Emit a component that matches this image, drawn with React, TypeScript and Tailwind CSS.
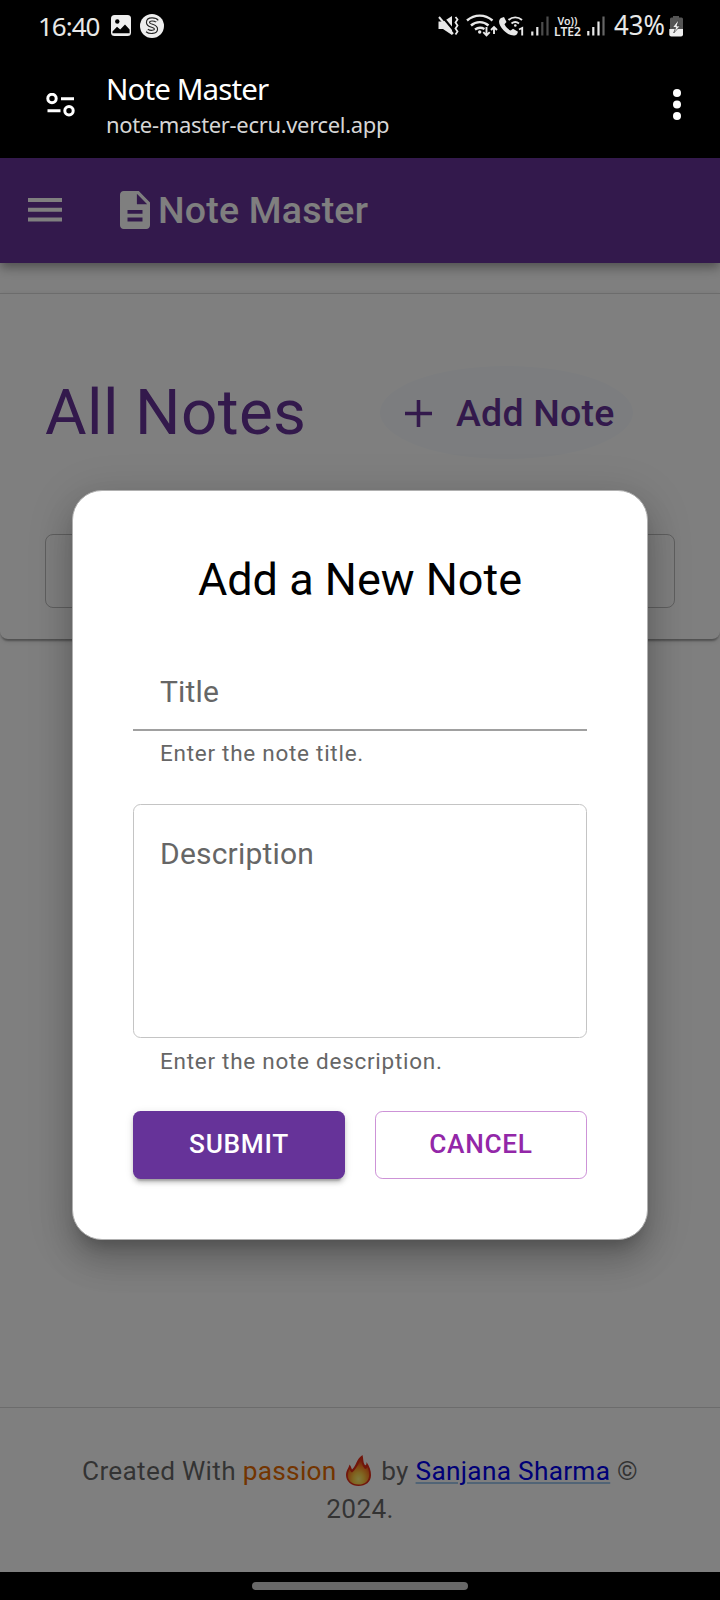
import type { ReactNode } from "react";

function StatusBar() {
  return (
    <div className="flex h-[52px] items-center justify-between pl-[38px] pr-[36px] font-['Noto_Sans',sans-serif] text-[#e8e8e8]">
      <div className="flex items-center">
        <span className="w-[62px] whitespace-nowrap pb-[1px] text-[26px] leading-[36px] tracking-[-1px]">16:40</span>
        <svg className="ml-[11px] h-[22px] w-[20px]" viewBox="0 0 20 22">
          <rect width="20" height="21" rx="3.5" fill="#eee" />
          <circle cx="6.3" cy="6.5" r="2.2" fill="#000" />
          <path d="M1.5 16.5 6 11.8l3.2 2.7 4.8-5 4.6 5v3.8H1.5Z" fill="#000" />
        </svg>
        <svg className="ml-[9px] size-6" viewBox="0 0 24 24">
          <circle cx="12" cy="12" r="12" fill="#eee" />
          <path d="M17 7.2C15.5 5 8 4.2 8 8.400c0 4.200 8 2.600 8 6.600 0 3.600-6.500 3.500-9 1.500" fill="none" stroke="#222" strokeWidth="4.200" />
          <path d="M17 7.2C15.5 5 8 4.2 8 8.400c0 4.200 8 2.600 8 6.600 0 3.600-6.500 3.500-9 1.500" fill="none" stroke="#eee" strokeWidth="2" />
        </svg>
      </div>
      <svg className="h-[36px] w-[250px]" viewBox="434 8 250 36" fill="none">
        <g fill="#e8e8e8">
          <path d="M438.500 21.500h5l8.500-5.500v19l-9-6h-4.500Z" />
          <path d="m441 15 12 14.500" stroke="#000" strokeWidth="2" />
          <path d="m439 17 14 17" stroke="#e8e8e8" strokeWidth="2" />
          <path d="M455.500 17l2 2.500-2 3 2 3-2 3 2 3-2 3" fill="none" stroke="#e8e8e8" strokeWidth="1.800" />
        </g>
        <g stroke="#e8e8e8" strokeWidth="2.400">
          <path d="M467 20.500c7.500-6.500 18-6.500 25.500 0M471 25.500c5-4.500 12.500-4.500 17.500 0M475 29.500c3-2.200 6.500-2.200 9.500-.5" />
          <circle cx="479.700" cy="32" r="1.700" fill="#e8e8e8" stroke="none" />
          <path d="M486.500 27v8m-3.200-2.800 3.200 3.200 3.200-3.200M494 34v-6m-3 2 3-3 3 3" strokeWidth="1.900" />
        </g>
        <path d="m501 18 3-1 2.500 5-2 2.300c1.500 3.200 3.500 5 6.200 6.200l2.300-1.800 5 3-1 2.500c-3 3-10 0-13.500-4-4.500-5-6-9.500-2.500-12.200Z" fill="#e8e8e8" />
        <g stroke="#e8e8e8" strokeWidth="1.900">
          <path d="M508.500 20c4-3.500 9.500-3.500 13.500 0M511.500 23.500c2.500-2 5-2 7.500 0" />
          <circle cx="515.300" cy="25.500" r="1.300" fill="#e8e8e8" stroke="none" />
          <path d="m519 29.500 3.200-1.500v7.500" />
        </g>
        <g strokeWidth="2.200">
          <path d="M532.300 31.500v4M537.300 27v8.500" stroke="#e8e8e8" />
          <path d="M542.300 22v13.500M547.500 16.500v19" stroke="#4c4c4c" />
          <path d="M588.300 31v4.500M593.300 27v8.500M598.500 21.500v14" stroke="#e8e8e8" />
          <path d="M603.500 16.500v19" stroke="#666" />
        </g>
        <text x="557.500" y="24.500" fill="#e8e8e8" fontSize="11.500" fontWeight="600" textLength="20" lengthAdjust="spacingAndGlyphs">Vo))</text>
        <text x="554" y="36" fill="#e8e8e8" fontSize="12" fontWeight="600" textLength="27" lengthAdjust="spacingAndGlyphs">LTE2</text>
        <text x="614" y="35" fill="#e8e8e8" fontSize="26.500" textLength="51" lengthAdjust="spacingAndGlyphs">43%</text>
        <path d="M673 16h6v1.500h2.500q1.500 0 1.500 1.500v10h-13V19q0-1.500 1.500-1.500h1.500Z" fill="#555" />
        <path d="M669.300 29h13.700v5.500q0 2-2 2h-9.700q-2 0-2-2Z" fill="#eee" />
        <path d="m677.500 21-5 6.500h3.200l-2 5.500 6.500-7h-3.200l1.500-5Z" fill="#eee" stroke="#333" strokeWidth=".7" />
      </svg>
    </div>
  );
}

function BrowserBar() {
  return (
    <div className="flex h-[106px] items-center pl-[46px] pr-[39px] font-['Noto_Sans',sans-serif] text-white">
      <svg className="h-6 w-[30px]" viewBox="0 0 30 24" fill="none" stroke="#fff" strokeWidth="3">
        <circle cx="6" cy="5.500" r="4.200" />
        <path d="M15 5.700h13M1.500 17.700h13" />
        <circle cx="23" cy="17.700" r="4.200" />
      </svg>
      <div className="ml-[30px] flex flex-1 flex-col pt-[2px]">
        <span className="text-[29.5px] leading-[36px] tracking-[-0.9px]">Note Master</span>
        <span className="text-[22px] leading-[34px] tracking-[-0.33px] text-[#d6d6d6]">note-master-ecru.vercel.app</span>
      </div>
      <svg className="h-8 w-2" viewBox="0 0 8 32" fill="#fff">
        <circle cx="4" cy="4" r="4" />
        <circle cx="4" cy="15.500" r="4" />
        <circle cx="4" cy="27" r="4" />
      </svg>
    </div>
  );
}

function Flame() {
  return (
    <svg className="mx-[3px] inline-block h-[31px] w-[25px] align-[-6px]" viewBox="0 0 25 31" role="img" aria-label="fire">
      <defs>
        <radialGradient id="flame" cx="50%" cy="80%" r="70%">
          <stop offset="0" stopColor="#fff27a" />
          <stop offset=".35" stopColor="#ffcf45" />
          <stop offset=".68" stopColor="#ff8a25" />
          <stop offset="1" stopColor="#e8381b" />
        </radialGradient>
      </defs>
      <path d="M16.500 0c1 4 .5 7 2 9.500 1 1.500 2.300.5 2-2.500 3 4 4.500 9 4.500 13 0 7-5.500 11-12.500 11S0 26.500 0 20c0-4.500 2.500-6.500 3.500-10.500 1.500 1.500 1.500 3 2.500 5C10.500 11 10 4 16.500 0Z" fill="#e32d18" />
      <path d="M15.500 3c-.5 5 1.500 9 3.500 11 1.200 0 2-.8 2.500-2 4 9 1 17.500-9 17.500S-.5 21.500 3.500 14c.7 2 1.300 3 2.500 3.500 5-4 6.500-9 9.500-14.500Z" fill="url(#flame)" />
    </svg>
  );
}

function AppPage() {
  return (
    <div className="flex h-full flex-col bg-white">
      <header className="z-10 flex h-[105px] shrink-0 items-center bg-[#663399] pb-[1px] pl-[28px] text-white shadow-[0_4px_8px_-2px_rgba(0,0,0,0.2),0_7px_9px_rgba(0,0,0,0.14),0_2px_19px_rgba(0,0,0,0.12)]">
        <svg className="h-6 w-[34px]" viewBox="0 0 34 24" fill="currentColor">
          <path d="M0 0h34v4H0zM0 9.700h34v4H0zM0 19.400h34v4H0z" />
        </svg>
        <svg className="ml-[58px] h-[38px] w-[30px]" viewBox="4 2 16 20" preserveAspectRatio="none" fill="currentColor">
          <path d="M14 2H6c-1.100 0-1.990.9-1.990 2L4 20c0 1.100.89 2 1.990 2H18c1.100 0 2-.9 2-2V8l-6-6zm2 16H8v-2h8v2zm0-4H8v-2h8v2zm-3-5V3.500L18.500 9H13z" />
        </svg>
        <span className="ml-[8px] text-[37.5px] font-medium tracking-[0.2px]">Note Master</span>
      </header>
      <div className="h-[30px] shrink-0" />
      <section className="flex h-[346px] shrink-0 flex-col rounded-b-[8px] border-t border-black/15 px-[45px] shadow-[0_4px_2px_-2px_rgba(0,0,0,0.2),0_2px_2px_rgba(0,0,0,0.14),0_2px_6px_rgba(0,0,0,0.12)]">
        <div className="mt-[72px] flex h-[93px] items-center">
          <h1 className="w-[335px] whitespace-nowrap text-[63.75px] leading-[79px] tracking-[0.4px] text-[#663399]">All Notes</h1>
          <button className="flex h-[93px] w-[253px] items-center rounded-[50%] bg-[#1976d2]/[0.03] pl-[25px] pt-[2px] text-[37.5px] font-medium text-[#663399]">
            <svg className="h-[27px] w-[27px]" viewBox="0 0 27 27" fill="currentColor">
              <path d="M11.700 0h3.600v11.700H27v3.600H15.300V27h-3.600V15.300H0v-3.600h11.700z" />
            </svg>
            <span className="ml-[24px] whitespace-nowrap tracking-[0.2px]">Add Note</span>
          </button>
        </div>
        <div className="mt-[75px] h-[74px] rounded-[8px] border border-black/25" />
      </section>
      <footer className="mt-auto h-[165px] shrink-0 border-t border-black/15 px-[75px] pt-[45px] text-center text-[26.25px] leading-[37.5px] tracking-[0.281px] text-black/60">
        Created With <span className="text-[#e66a00]">passion</span> <Flame /> by{" "}
        <a href="#author" className="text-[#0000ee] underline decoration-[#1976d2]/40 decoration-2 underline-offset-[2px]">Sanjana Sharma</a> © 2024.
      </footer>
    </div>
  );
}

function Helper({ children }: { children: ReactNode }) {
  return <p className="pl-[27px] text-[22.5px] leading-[37px] tracking-[0.73px] text-[#666]">{children}</p>;
}

function NoteDialog() {
  return (
    <div className="flex h-[750px] w-[576px] flex-col rounded-[30px] border border-[#b0b0b0] bg-white px-[60px] pt-[59px] shadow-[0_13px_15px_-8px_rgba(0,0,0,0.2),0_22px_32px_2px_rgba(0,0,0,0.14),0_8px_41px_7px_rgba(0,0,0,0.12)]">
      <h2 className="text-center text-[45px] leading-[60px] text-black">Add a New Note</h2>
      <div className="h-[121px] border-b-2 border-[#a0a0a0] pl-[27px] pt-[59px] text-[30px] leading-[45px] tracking-[0.2px] text-[#666]">Title</div>
      <div className="mt-[4px]"><Helper>Enter the note title.</Helper></div>
      <div className="mt-[32px] h-[234px] rounded-[7.5px] border-[1.500px] border-[#c4c4c4] pl-[26px] pt-[26px] text-[30px] leading-[45px] tracking-[0.2px] text-[#666]">Description</div>
      <div className="mt-[5px]"><Helper>Enter the note description.</Helper></div>
      <div className="mt-[31px] grid h-[68px] grid-cols-2 gap-[30px] text-[26.25px] font-medium tracking-[0.7px]">
        <button className="rounded-[7.5px] bg-[#663399] pb-[1px] text-white shadow-[0_6px_2px_-4px_rgba(0,0,0,0.2),0_4px_4px_rgba(0,0,0,0.14),0_2px_9px_rgba(0,0,0,0.12)]">SUBMIT</button>
        <button className="rounded-[7.5px] border-[1.500px] border-[#9c27b0]/50 pb-[1px] text-[#9327a8]">CANCEL</button>
      </div>
    </div>
  );
}

export default function App() {
  return (
    <div className="flex h-[1600px] w-[720px] flex-col overflow-hidden bg-black font-[Roboto,sans-serif]">
      <StatusBar />
      <BrowserBar />
      <main className="relative min-h-0 flex-1 overflow-hidden">
        <AppPage />
        <div className="absolute inset-0 z-20 flex items-center justify-center bg-black/50">
          <NoteDialog />
        </div>
      </main>
      <div className="flex h-[28px] shrink-0 items-center justify-center">
        <div className="h-[8px] w-[216px] rounded-full bg-[#686868]" />
      </div>
    </div>
  );
}
